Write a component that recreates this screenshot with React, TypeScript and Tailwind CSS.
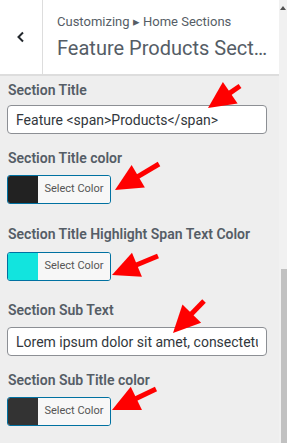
import React from "react";

// ── Red annotation arrows (tip + tail in page pixels) ─────────────────────────

type Arrow = { tip: [number, number]; tail: [number, number] };

const arrows: Arrow[] = [
  { tip: [208, 108], tail: [240, 86] },
  { tip: [115, 190], tail: [159, 164] },
  { tip: [112, 275], tail: [158, 256] },
  { tip: [173, 333], tail: [204, 301] },
  { tip: [112, 410], tail: [156, 389] },
];

function arrowShape({ tip, tail }: Arrow) {
  const dx = tail[0] - tip[0];
  const dy = tail[1] - tip[1];
  const len = Math.hypot(dx, dy);
  const ux = dx / len;
  const uy = dy / len;
  const head = 27;
  const half = 13;
  const bx = tip[0] + ux * head;
  const by = tip[1] + uy * head;
  const nx = -uy;
  const ny = ux;
  const pts = [
    [tip[0], tip[1]],
    [bx + nx * half, by + ny * half],
    [bx - nx * half, by - ny * half],
  ]
    .map((p) => p.join(","))
    .join(" ");
  return { pts, bx: bx - ux * 2, by: by - uy * 2 };
}

function Arrows() {
  return (
    <svg className="absolute inset-0 pointer-events-none" width={287} height={443}>
      {arrows.map((a, i) => {
        const s = arrowShape(a);
        return (
          <g key={i}>
            <line x1={s.bx} y1={s.by} x2={a.tail[0]} y2={a.tail[1]} stroke="#ff0000" strokeWidth={5} />
            <polygon points={s.pts} fill="#ff0000" />
          </g>
        );
      })}
    </svg>
  );
}

// ── Controls ─────────────────────────────────────────────────────────────────

function Label({ children, className = "" }: { children: React.ReactNode; className?: string }) {
  return (
    <div className={`text-[14px] leading-[20px] font-semibold text-[#555d66] ${className}`}>{children}</div>
  );
}

function TextInput({ value }: { value: string }) {
  return (
    <div className="w-[260px] h-[29px] bg-white border border-[#8c8f94] rounded-[4px] px-[8px] flex items-center">
      <div className="flex-1 min-w-0 overflow-hidden">
        <span className="text-[14px] text-[#32373c] whitespace-nowrap">{value}</span>
      </div>
    </div>
  );
}

function ColorButton({ swatch }: { swatch: string }) {
  return (
    <div className="w-[104px] h-[29px] flex border border-[#0071a1] rounded-[3px] overflow-hidden">
      <div className="w-[30px] h-full" style={{ background: swatch }} />
      <div className="flex-1 bg-[#f7f7f7] flex items-center justify-center text-[11px] text-[#555555]">
        Select Color
      </div>
    </div>
  );
}

// ── Page ─────────────────────────────────────────────────────────────────────

export default function App() {
  return (
    <div
      className="relative w-[287px] h-[443px] overflow-hidden flex bg-[#eeeeee]"
      style={{ fontFamily: "Roboto, 'Liberation Sans', sans-serif" }}
    >
      <div className="w-[279px] flex flex-col">
        {/* Header */}
        <div className="h-[76px] bg-white border-b-2 border-[#dddddd] flex">
          <div className="w-[43px] border-r border-[#dddddd] flex items-center justify-center">
            <svg width="10" height="12" viewBox="0 0 10 12">
              <path d="M7 1.5 L2.5 6 L7 10.5" stroke="#23282d" strokeWidth="2" fill="none" />
            </svg>
          </div>
          <div className="flex-1 min-w-0 pl-[14px] pr-[10px] pt-[13px]">
            <div className="text-[13px] leading-[18px] text-[#555d66] whitespace-nowrap">
              Customizing ▸ Home Sections
            </div>
            <div className="text-[20px] leading-[28px] mt-[3px] text-[#555d66] truncate">
              Feature Products Section Settings
            </div>
          </div>
        </div>

        {/* Controls */}
        <div className="pl-[7px] pt-[4px]">
          <Label className="pl-[1px] mb-[5px]">Section Title</Label>
          <TextInput value="Feature <span>Products</span>" />

          <Label className="pl-[1px] mt-[14px] mb-[7px]">Section Title color</Label>
          <ColorButton swatch="#222222" />

          <Label className="pl-[1px] mt-[20px] mb-[8px]">Section Title Highlight Span Text Color</Label>
          <ColorButton swatch="#12e4de" />

          <Label className="pl-[1px] mt-[19px] mb-[7px]">Section Sub Text</Label>
          <TextInput value="Lorem ipsum dolor sit amet, consectetur adipiscing elit" />

          <Label className="pl-[1px] mt-[14px] mb-[7px]">Section Sub Title color</Label>
          <ColorButton swatch="#333333" />
        </div>
      </div>

      {/* Scrollbar */}
      <div className="w-[8px] bg-[#f1f1f1] flex flex-col">
        <svg width="8" height="12" viewBox="0 0 8 12" className="mt-[4px]">
          <path d="M4 2 L7 6 L1 6 Z" fill="#505050" />
        </svg>
        <div className="ml-[2px] mt-[253px] flex-1 bg-[#c1c1c1]" />
      </div>

      <Arrows />
    </div>
  );
}
